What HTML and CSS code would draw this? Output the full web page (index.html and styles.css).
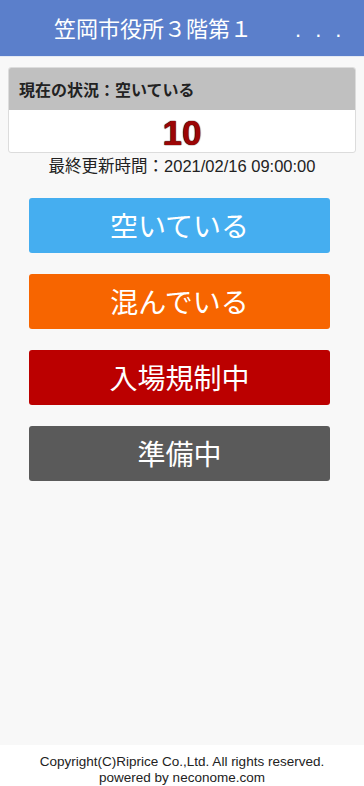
FILE: index.html
```html
<!DOCTYPE html>
<html lang="ja">
<head>
<meta charset="utf-8">
<meta name="viewport" content="width=device-width, initial-scale=1">
<title>笠岡市役所３階第１会議室</title>
<link rel="stylesheet" href="styles.css">
</head>
<body>
<div class="page">
  <header class="header">
    <h1 class="title">笠岡市役所３階第１<span class="dots">...</span></h1>
  </header>
  <main class="main">
    <section class="card">
      <div class="card-head">現在の状況：空いている</div>
      <div class="card-body"><span class="count">10</span></div>
    </section>
    <p class="updated">最終更新時間：2021/02/16 09:00:00</p>
    <div class="buttons">
      <button class="btn btn-free" type="button">空いている</button>
      <button class="btn btn-busy" type="button">混んでいる</button>
      <button class="btn btn-limit" type="button">入場規制中</button>
      <button class="btn btn-prep" type="button">準備中</button>
    </div>
  </main>
  <footer class="footer">
    <div>Copyright(C)Riprice Co.,Ltd. All rights reserved.</div>
    <div>powered by neconome.com</div>
  </footer>
</div>
</body>
</html>
```
FILE: styles.css
```css
html, body {
  margin: 0;
  padding: 0;
}
body {
  background: #f8f8f8;
  font-family: "Liberation Sans", "Noto Sans CJK JP", sans-serif;
  color: #222;
}
.page {
  min-height: 786px;
  display: flex;
  flex-direction: column;
}
.header {
  background: #5b7fcb;
  height: 56px;
  border-bottom: 1px solid #e4e9f4;
  display: flex;
  align-items: center;
}
.title {
  margin: 0;
  padding-left: 54px;
  font-family: "Noto Sans CJK JP", sans-serif;
  font-size: 22px;
  font-weight: normal;
  color: #fff;
  white-space: nowrap;
  line-height: 30px;
}
.dots {
  font-family: "Liberation Sans", sans-serif;
  font-size: 22px;
  margin-left: 43px;
  letter-spacing: 14px;
}
.main {
  flex: 1;
  padding-top: 10px;
}
.card {
  margin: 0 8px;
  background: #fff;
  border: 1px solid #dcdcdc;
  border-radius: 3px;
  overflow: hidden;
}
.card-head {
  background: #c0c0c0;
  height: 42px;
  display: flex;
  align-items: center;
  padding-left: 10px;
  font-family: "Noto Sans CJK JP", sans-serif;
  font-weight: bold;
  font-size: 16px;
  color: #222;
}
.card-body {
  height: 42px;
  display: flex;
  align-items: center;
  justify-content: center;
}
.count {
  font-size: 35px;
  font-weight: bold;
  color: #9c0505;
  text-shadow: 0 0 1px #2a0000, 0 0 1px #2a0000;
  line-height: 1;
  padding-top: 2px;
}
.updated {
  margin: 2px 0 0;
  text-align: center;
  font-size: 16.5px;
  line-height: 22px;
  color: #222;
}
.buttons {
  padding: 21px 0 0 29px;
  display: flex;
  flex-direction: column;
  gap: 21px;
}
.btn {
  width: 301px;
  height: 55px;
  border: none;
  border-radius: 3px;
  color: #fff;
  font-family: "Noto Sans CJK JP", sans-serif;
  font-size: 28px;
  padding: 0 0 2px;
  cursor: pointer;
}
.btn-free { background: #45aef0; }
.btn-busy { background: #f76500; }
.btn-limit { background: #bb0000; }
.btn-prep { background: #5a5a5a; }
.footer {
  background: #fff;
  height: 41px;
  padding-top: 9px;
  box-sizing: border-box;
  text-align: center;
  font-size: 13.5px;
  line-height: 16px;
  color: #222;
}
```
